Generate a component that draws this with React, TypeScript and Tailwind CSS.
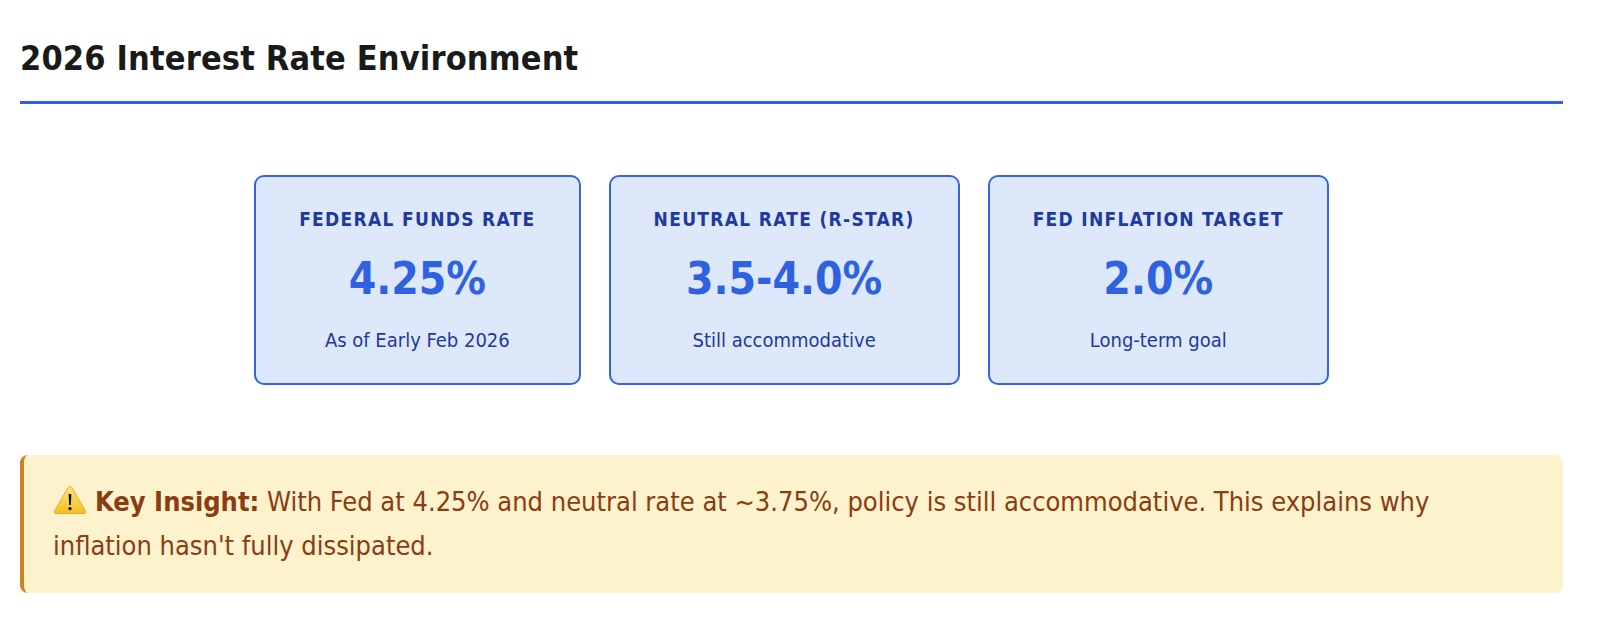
import React from "react";

const font = { fontFamily: '"DejaVu Sans Condensed", "DejaVu Sans", Tahoma, sans-serif' };

interface RateCard {
  label: string;
  value: string;
  note: string;
}

const cards: RateCard[] = [
  { label: "Federal Funds Rate", value: "4.25%", note: "As of Early Feb 2026" },
  { label: "Neutral Rate (R-Star)", value: "3.5-4.0%", note: "Still accommodative" },
  { label: "Fed Inflation Target", value: "2.0%", note: "Long-term goal" },
];

const WarningIcon = () => (
  <svg width="34" height="30" viewBox="0 0 34 30" className="inline-block align-[-4px] mr-[8px]">
    <defs>
      <linearGradient id="warn" x1="0" y1="0" x2="0" y2="1">
        <stop offset="0" stopColor="#fde37a" />
        <stop offset="1" stopColor="#f3c022" />
      </linearGradient>
    </defs>
    <path d="M17 1.5 Q18.4 1.5 19.2 2.9 L32.6 26.2 Q33.4 28.5 31 28.5 L3 28.5 Q0.6 28.5 1.4 26.2 L14.8 2.9 Q15.6 1.5 17 1.5 Z" fill="url(#warn)" stroke="#e0a41c" strokeWidth="0.8" />
    <path d="M15.6 9 L18.4 9 L17.8 20 L16.2 20 Z" fill="#111" />
    <circle cx="17" cy="23.6" r="1.7" fill="#111" />
  </svg>
);

export default function App() {
  return (
    <div className="w-[1600px] min-h-[623px] bg-white pl-[20px]" style={font}>
      <div className="w-[1543px]">
        <h2 className="pt-[39px] pb-[24px] text-[34px] leading-[38px] font-bold tracking-[0.15px] text-[#1a1a1a] border-b-[3px] border-[#2f62e6]">
          2026 Interest Rate Environment
        </h2>

        <div className="mt-[71px] flex justify-center gap-[28px]">
          {cards.map((card) => (
            <div
              key={card.label}
              className="rounded-[10px] border-2 border-[#3563e3] bg-[#dde8fb] px-[43px] pt-[30px] pb-[31px] text-center"
            >
              <div className="text-[19px] leading-[24px] font-bold uppercase tracking-[1.3px] text-[#1e3a9f]">
                {card.label}
              </div>
              <div className="mt-[23px] text-[44px] leading-[50px] font-bold text-[#2f62e0]">
                {card.value}
              </div>
              <div className="mt-[24px] text-[20px] leading-[24px] text-[#1e3a9a]">
                {card.note}
              </div>
            </div>
          ))}
        </div>

        <div className="mt-[70px] rounded-[8px] border-l-4 border-[#d4801f] bg-[#fcf2cc] pl-[29px] pr-[30px] pt-[25px] pb-[25px]">
          <p className="text-[27px] leading-[44px] text-[#8b3c12]">
            <WarningIcon />
            <strong className="font-bold">Key Insight:</strong> With Fed at 4.25% and neutral rate at ~3.75%, policy is still
            accommodative. This explains why inflation hasn't fully dissipated.
          </p>
        </div>
      </div>
    </div>
  );
}
